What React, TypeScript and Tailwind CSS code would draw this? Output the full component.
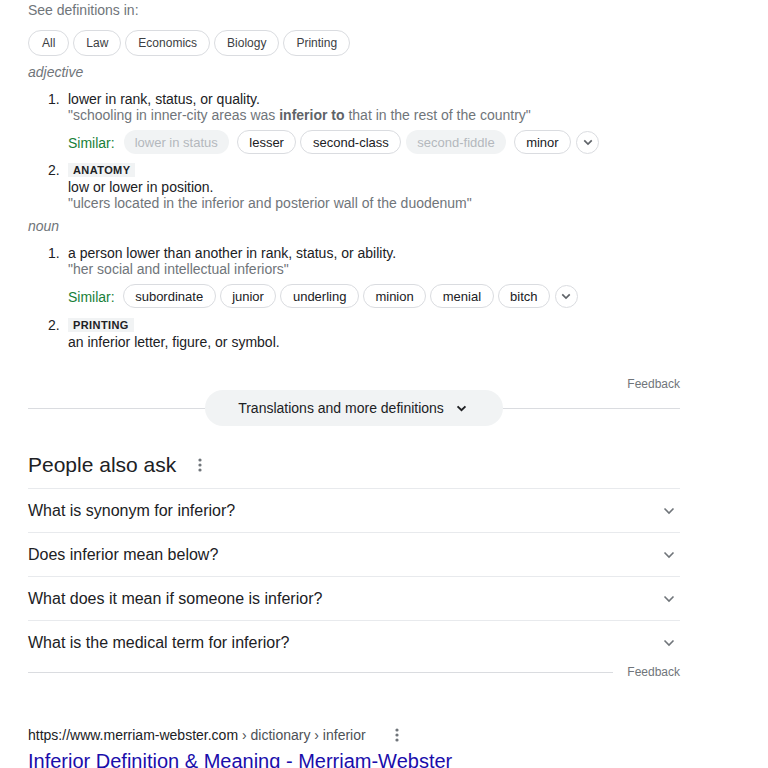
import React from "react";

const Chevron = ({ className = "" }: { className?: string }) => (
  <svg width="12" height="8" viewBox="0 0 12 8" className={className}>
    <path d="M1.5 1.5l4.5 4.5 4.5-4.5" fill="none" stroke="currentColor" strokeWidth="1.6" />
  </svg>
);

const Dots = () => (
  <svg width="4" height="14" viewBox="0 0 4 14" className="text-[#70757a]">
    <circle cx="2" cy="2" r="1.6" fill="currentColor" />
    <circle cx="2" cy="7" r="1.6" fill="currentColor" />
    <circle cx="2" cy="12" r="1.6" fill="currentColor" />
  </svg>
);

type Syn = { w: string; off?: boolean };

const SimilarRow = ({ words }: { words: Syn[] }) => (
  <div className="flex items-center h-[24px] mt-[7px]">
    <span className="text-[14px] text-[#188038] mr-[8px] mt-[3px]">Similar:</span>
    <div className="flex items-center gap-[4px]">
      {words.map((s) =>
        s.off ? (
          <span
            key={s.w}
            className="h-[24px] flex items-center ml-[1px] mr-[4px] px-[11px] rounded-full bg-[#f1f3f4] text-[13px] text-[#b4b8bd] leading-none"
          >
            {s.w}
          </span>
        ) : (
          <span
            key={s.w}
            className="h-[24px] flex items-center px-[11.5px] rounded-full border border-[#dadce0] text-[13px] text-[#202124] leading-none"
          >
            {s.w}
          </span>
        )
      )}
      <span className="w-[23px] h-[23px] ml-[1px] rounded-full border border-[#dadce0] flex items-center justify-center text-[#5f6368]">
        <svg width="10" height="7" viewBox="0 0 12 8">
          <path d="M1.5 1.5l4.5 4.5 4.5-4.5" fill="none" stroke="currentColor" strokeWidth="2" />
        </svg>
      </span>
    </div>
  </div>
);

const Label = ({ text }: { text: string }) => (
  <div className="flex h-[14px]">
    <span className="flex items-center h-[14px] px-[5px] bg-[#f1f3f4] text-[11px] font-bold tracking-[0.4px] text-[#202124] leading-none">
      {text}
    </span>
  </div>
);

const questions = [
  "What is synonym for inferior?",
  "Does inferior mean below?",
  "What does it mean if someone is inferior?",
  "What is the medical term for inferior?",
];

export default function App() {
  return (
    <div className="w-[768px] h-[768px] overflow-hidden bg-white font-['Liberation_Sans',Arial,sans-serif]">
      <div className="ml-[28px] w-[652px]">
        <div className="h-[20px] leading-[20px] text-[14px] text-[#70757a]">See definitions in:</div>
        <div className="flex gap-[4px] mt-[10px]">
          {["All", "Law", "Economics", "Biology", "Printing"].map((c) => (
            <span
              key={c}
              className={`h-[26px] flex items-center rounded-full border border-[#dadce0] text-[12px] text-[#3c4043] ${
                c === "All" ? "px-[13px]" : "px-[12px]"
              }`}
            >
              {c}
            </span>
          ))}
        </div>
        <div className="mt-[6px] h-[20px] leading-[20px] text-[14px] italic text-[#70757a]">adjective</div>

        <div className="mt-[9px] flex">
          <span className="w-[40px] pl-[20px] text-[14px] leading-[16px] text-[#202124]">1.</span>
          <div className="flex-1">
            <div className="text-[14px] leading-[16px] text-[#202124]">lower in rank, status, or quality.</div>
            <div className="text-[14px] leading-[16px] text-[#70757a]">
              "schooling in inner-city areas was <b className="text-[#5f6368]">inferior to</b> that in the rest of
              the country"
            </div>
            <SimilarRow
              words={[
                { w: "lower in status", off: true },
                { w: "lesser" },
                { w: "second-class" },
                { w: "second-fiddle", off: true },
                { w: "minor" },
              ]}
            />
          </div>
        </div>
        <div className="mt-[9px] flex">
          <span className="w-[40px] pl-[20px] text-[14px] leading-[14px] text-[#202124]">2.</span>
          <div className="flex-1">
            <Label text="ANATOMY" />
            <div className="mt-[2px] text-[14px] leading-[16px] text-[#202124]">low or lower in position.</div>
            <div className="text-[14px] leading-[16px] text-[#70757a]">
              "ulcers located in the inferior and posterior wall of the duodenum"
            </div>
          </div>
        </div>

        <div className="mt-[5px] h-[20px] leading-[20px] text-[14px] italic text-[#70757a]">noun</div>
        <div className="mt-[9px] flex">
          <span className="w-[40px] pl-[20px] text-[14px] leading-[16px] text-[#202124]">1.</span>
          <div className="flex-1">
            <div className="text-[14px] leading-[16px] text-[#202124]">
              a person lower than another in rank, status, or ability.
            </div>
            <div className="text-[14px] leading-[16px] text-[#70757a]">"her social and intellectual inferiors"</div>
            <SimilarRow
              words={[
                { w: "subordinate" },
                { w: "junior" },
                { w: "underling" },
                { w: "minion" },
                { w: "menial" },
                { w: "bitch" },
              ]}
            />
          </div>
        </div>
        <div className="mt-[10px] flex">
          <span className="w-[40px] pl-[20px] text-[14px] leading-[14px] text-[#202124]">2.</span>
          <div className="flex-1">
            <Label text="PRINTING" />
            <div className="mt-[2px] text-[14px] leading-[16px] text-[#202124]">an inferior letter, figure, or symbol.</div>
          </div>
        </div>

        <div className="mt-[27px] h-[14px] flex justify-end items-center text-[12px] text-[#70757a]">Feedback</div>
        <div className="flex items-center h-[36px] -mt-px">
          <div className="flex-1 h-px bg-[#dadce0]" />
          <div className="h-[36px] flex items-center gap-[12px] pl-[33px] pr-[36px] rounded-full bg-[#f1f3f4] text-[14px] text-[#202124]">
            Translations and more definitions
            <svg width="11" height="7" viewBox="0 0 12 8">
              <path d="M1.5 1.5l4.5 4.5 4.5-4.5" fill="none" stroke="#202124" strokeWidth="2.2" />
            </svg>
          </div>
          <div className="flex-1 h-px bg-[#dadce0]" />
        </div>

        <div className="mt-[25px] h-[28px] flex items-center gap-[22px]">
          <span className="text-[21px] text-[#202124]">People also ask</span>
          <Dots />
        </div>
        <div className="mt-[9px]">
          {questions.map((q) => (
            <div key={q} className="border-t border-[#e8eaed] flex items-start justify-between h-[44px]">
              <span className="h-[43px] flex items-center text-[16px] text-[#202124]">{q}</span>
              <span className="h-[43px] flex items-center pr-[5px] text-[#70757a]">
                <Chevron />
              </span>
            </div>
          ))}
          <div className="flex items-center h-[16px]">
            <div className="flex-1 h-px bg-[#dadce0]" />
            <span className="ml-[14px] text-[12px] text-[#70757a]">Feedback</span>
          </div>
        </div>

        <div className="mt-[45px] h-[20px] flex items-center text-[14px]">
          <span className="text-[#202124]">https://www.merriam-webster.com</span>
          <span className="text-[#4d5156]">&nbsp;› dictionary › inferior</span>
          <span className="ml-[29px]">
            <Dots />
          </span>
        </div>
        <div className="mt-[3px] text-[20px] leading-[26px] text-[#1a0dab]">
          Inferior Definition &amp; Meaning - Merriam-Webster
        </div>
      </div>
    </div>
  );
}
